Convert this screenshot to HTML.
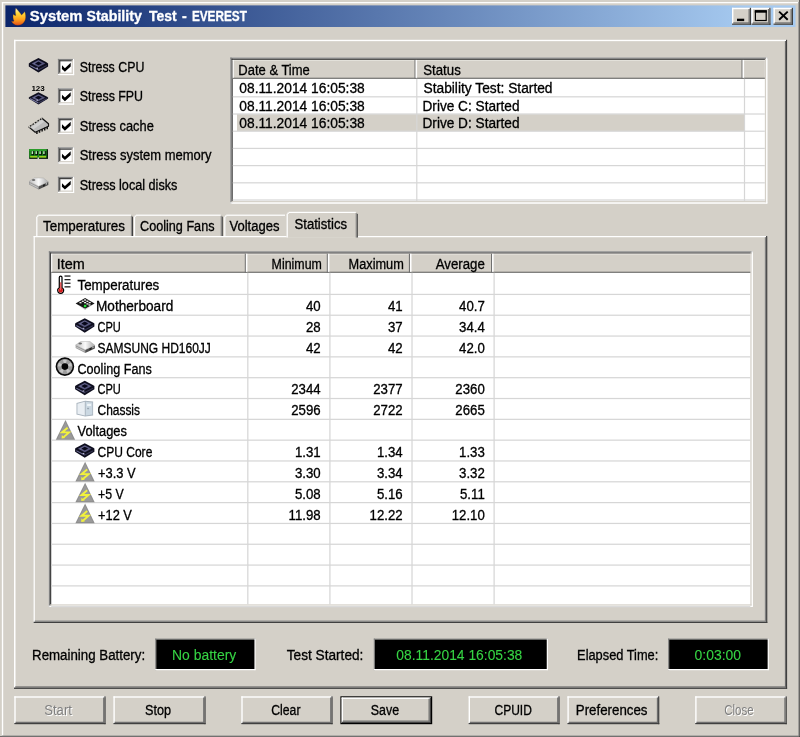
<!DOCTYPE html>
<html><head><meta charset="utf-8"><title>System Stability Test - EVEREST</title>
<style>
html,body{margin:0;padding:0;background:#d4d0c8;overflow:hidden}
svg{display:block;will-change:transform}
svg text{font-family:"Liberation Sans",sans-serif;white-space:pre}
</style></head><body>
<svg width="800" height="737" viewBox="0 0 800 737">
<rect x="0.00" y="0.00" width="800.00" height="737.00" fill="#d4d0c8"/>
<rect x="1.90" y="2.05" width="796.50" height="1.20" fill="#ffffff"/>
<rect x="1.85" y="2.05" width="1.35" height="733.55" fill="#ffffff"/>
<rect x="0.00" y="736.20" width="800.00" height="0.80" fill="#555555"/>
<rect x="799.20" y="0.00" width="0.80" height="737.00" fill="#404040"/>
<rect x="1.90" y="735.60" width="797.30" height="0.70" fill="#7a7a7a"/>
<rect x="798.40" y="2.00" width="0.80" height="734.00" fill="#808080"/>
<defs><linearGradient id="tg" x1="0" x2="1" y1="0" y2="0"><stop offset="0" stop-color="#0a246a"/><stop offset="0.94" stop-color="#a6caf0"/></linearGradient></defs>
<rect x="5.40" y="5.40" width="790.10" height="21.60" fill="url(#tg)"/>
<text y="21.30" font-size="14" font-weight="bold" fill="#fff" stroke="#fff" stroke-width="0.3"><tspan x="29.80" textLength="52.77" lengthAdjust="spacingAndGlyphs">System</tspan> <tspan x="86.60" textLength="55.28" lengthAdjust="spacingAndGlyphs">Stability</tspan> <tspan x="149.00" textLength="27.56" lengthAdjust="spacingAndGlyphs">Test</tspan> <tspan x="182.00" textLength="4.76" lengthAdjust="spacingAndGlyphs">-</tspan> <tspan x="191.90" textLength="55.02" lengthAdjust="spacingAndGlyphs">EVEREST</tspan></text>
<rect x="732.00" y="7.80" width="19.00" height="17.00" fill="#d4d0c8"/>
<rect x="732.00" y="7.80" width="19.00" height="1.40" fill="#ffffff"/>
<rect x="732.00" y="7.80" width="1.40" height="17.00" fill="#ffffff"/>
<rect x="732.00" y="23.57" width="19.00" height="1.23" fill="#404040"/>
<rect x="749.77" y="7.80" width="1.23" height="17.00" fill="#404040"/>
<rect x="733.23" y="22.35" width="16.55" height="1.23" fill="#6e6e6e"/>
<rect x="748.55" y="9.03" width="1.23" height="14.55" fill="#6e6e6e"/>
<rect x="751.50" y="7.80" width="19.00" height="17.00" fill="#d4d0c8"/>
<rect x="751.50" y="7.80" width="19.00" height="1.40" fill="#ffffff"/>
<rect x="751.50" y="7.80" width="1.40" height="17.00" fill="#ffffff"/>
<rect x="751.50" y="23.57" width="19.00" height="1.23" fill="#404040"/>
<rect x="769.27" y="7.80" width="1.23" height="17.00" fill="#404040"/>
<rect x="752.73" y="22.35" width="16.55" height="1.23" fill="#6e6e6e"/>
<rect x="768.05" y="9.03" width="1.23" height="14.55" fill="#6e6e6e"/>
<rect x="773.50" y="7.80" width="19.50" height="17.00" fill="#d4d0c8"/>
<rect x="773.50" y="7.80" width="19.50" height="1.40" fill="#ffffff"/>
<rect x="773.50" y="7.80" width="1.40" height="17.00" fill="#ffffff"/>
<rect x="773.50" y="23.57" width="19.50" height="1.23" fill="#404040"/>
<rect x="791.77" y="7.80" width="1.23" height="17.00" fill="#404040"/>
<rect x="774.73" y="22.35" width="17.05" height="1.23" fill="#6e6e6e"/>
<rect x="790.55" y="9.03" width="1.23" height="14.55" fill="#6e6e6e"/>
<rect x="737.00" y="18.70" width="7.20" height="2.40" fill="#000"/>
<rect x="755.40" y="10.90" width="10.80" height="9.60" fill="none" stroke="#000" stroke-width="1.2"/>
<rect x="754.80" y="10.30" width="12.00" height="2.40" fill="#000"/>
<path d="M779.1 11.6 L787.7 19.7 M787.7 11.6 L779.1 19.7" stroke="#000" stroke-width="1.9" fill="none"/>
<rect x="14.00" y="39.80" width="772.00" height="1.35" fill="#ffffff"/>
<rect x="14.00" y="39.80" width="1.50" height="647.80" fill="#ffffff"/>
<rect x="14.00" y="687.60" width="773.10" height="1.30" fill="#404040"/>
<rect x="786.00" y="39.80" width="1.10" height="649.10" fill="#404040"/>
<rect x="15.20" y="686.40" width="770.80" height="1.20" fill="#6a6a6a"/>
<rect x="784.90" y="41.00" width="1.10" height="646.60" fill="#6a6a6a"/>
<rect x="57.90" y="58.90" width="16.20" height="16.20" fill="#ffffff"/>
<rect x="57.90" y="58.90" width="16.20" height="1.23" fill="#808080"/>
<rect x="57.90" y="58.90" width="1.23" height="16.20" fill="#808080"/>
<rect x="59.12" y="60.12" width="13.75" height="1.23" fill="#404040"/>
<rect x="59.12" y="60.12" width="1.23" height="13.75" fill="#404040"/>
<rect x="57.90" y="73.88" width="16.20" height="1.23" fill="#ffffff"/>
<rect x="72.88" y="58.90" width="1.23" height="16.20" fill="#ffffff"/>
<rect x="59.12" y="72.65" width="13.75" height="1.23" fill="#d4d0c8"/>
<rect x="71.65" y="60.12" width="1.23" height="13.75" fill="#d4d0c8"/>
<path d="M62 65.25 L64.9 68.15 L70.7 62.80 V66.50 L64.9 71.70 L61.9 68.90 Z" fill="#000"/>
<text x="79.70" y="71.95" font-size="14" fill="#000" stroke="#000" stroke-width="0.3" textLength="64.65" lengthAdjust="spacingAndGlyphs">Stress CPU</text>
<rect x="57.90" y="88.37" width="16.20" height="16.20" fill="#ffffff"/>
<rect x="57.90" y="88.37" width="16.20" height="1.23" fill="#808080"/>
<rect x="57.90" y="88.37" width="1.23" height="16.20" fill="#808080"/>
<rect x="59.12" y="89.59" width="13.75" height="1.23" fill="#404040"/>
<rect x="59.12" y="89.59" width="1.23" height="13.75" fill="#404040"/>
<rect x="57.90" y="103.34" width="16.20" height="1.23" fill="#ffffff"/>
<rect x="72.88" y="88.37" width="1.23" height="16.20" fill="#ffffff"/>
<rect x="59.12" y="102.12" width="13.75" height="1.23" fill="#d4d0c8"/>
<rect x="71.65" y="89.59" width="1.23" height="13.75" fill="#d4d0c8"/>
<path d="M62 94.72 L64.9 97.62 L70.7 92.27 V95.97 L64.9 101.17 L61.9 98.37 Z" fill="#000"/>
<text x="79.70" y="101.37" font-size="14" fill="#000" stroke="#000" stroke-width="0.3" textLength="63.40" lengthAdjust="spacingAndGlyphs">Stress FPU</text>
<rect x="57.90" y="117.84" width="16.20" height="16.20" fill="#ffffff"/>
<rect x="57.90" y="117.84" width="16.20" height="1.23" fill="#808080"/>
<rect x="57.90" y="117.84" width="1.23" height="16.20" fill="#808080"/>
<rect x="59.12" y="119.06" width="13.75" height="1.23" fill="#404040"/>
<rect x="59.12" y="119.06" width="1.23" height="13.75" fill="#404040"/>
<rect x="57.90" y="132.81" width="16.20" height="1.23" fill="#ffffff"/>
<rect x="72.88" y="117.84" width="1.23" height="16.20" fill="#ffffff"/>
<rect x="59.12" y="131.59" width="13.75" height="1.23" fill="#d4d0c8"/>
<rect x="71.65" y="119.06" width="1.23" height="13.75" fill="#d4d0c8"/>
<path d="M62 124.19 L64.9 127.09 L70.7 121.74 V125.44 L64.9 130.64 L61.9 127.84 Z" fill="#000"/>
<text x="79.70" y="130.79" font-size="14" fill="#000" stroke="#000" stroke-width="0.3" textLength="74.10" lengthAdjust="spacingAndGlyphs">Stress cache</text>
<rect x="57.90" y="147.31" width="16.20" height="16.20" fill="#ffffff"/>
<rect x="57.90" y="147.31" width="16.20" height="1.23" fill="#808080"/>
<rect x="57.90" y="147.31" width="1.23" height="16.20" fill="#808080"/>
<rect x="59.12" y="148.53" width="13.75" height="1.23" fill="#404040"/>
<rect x="59.12" y="148.53" width="1.23" height="13.75" fill="#404040"/>
<rect x="57.90" y="162.28" width="16.20" height="1.23" fill="#ffffff"/>
<rect x="72.88" y="147.31" width="1.23" height="16.20" fill="#ffffff"/>
<rect x="59.12" y="161.06" width="13.75" height="1.23" fill="#d4d0c8"/>
<rect x="71.65" y="148.53" width="1.23" height="13.75" fill="#d4d0c8"/>
<path d="M62 153.66 L64.9 156.56 L70.7 151.21 V154.91 L64.9 160.11 L61.9 157.31 Z" fill="#000"/>
<text x="79.70" y="160.21" font-size="14" fill="#000" stroke="#000" stroke-width="0.3" textLength="131.90" lengthAdjust="spacingAndGlyphs">Stress system memory</text>
<rect x="57.90" y="176.78" width="16.20" height="16.20" fill="#ffffff"/>
<rect x="57.90" y="176.78" width="16.20" height="1.23" fill="#808080"/>
<rect x="57.90" y="176.78" width="1.23" height="16.20" fill="#808080"/>
<rect x="59.12" y="178.00" width="13.75" height="1.23" fill="#404040"/>
<rect x="59.12" y="178.00" width="1.23" height="13.75" fill="#404040"/>
<rect x="57.90" y="191.75" width="16.20" height="1.23" fill="#ffffff"/>
<rect x="72.88" y="176.78" width="1.23" height="16.20" fill="#ffffff"/>
<rect x="59.12" y="190.53" width="13.75" height="1.23" fill="#d4d0c8"/>
<rect x="71.65" y="178.00" width="1.23" height="13.75" fill="#d4d0c8"/>
<path d="M62 183.13 L64.9 186.03 L70.7 180.68 V184.38 L64.9 189.58 L61.9 186.78 Z" fill="#000"/>
<text x="79.70" y="189.63" font-size="14" fill="#000" stroke="#000" stroke-width="0.3" textLength="97.70" lengthAdjust="spacingAndGlyphs">Stress local disks</text>
<rect x="230.30" y="57.50" width="537.00" height="146.00" fill="#ffffff"/>
<rect x="230.30" y="57.50" width="537.00" height="1.23" fill="#808080"/>
<rect x="230.30" y="57.50" width="1.23" height="146.00" fill="#808080"/>
<rect x="231.53" y="58.73" width="534.55" height="1.23" fill="#404040"/>
<rect x="231.53" y="58.73" width="1.23" height="143.55" fill="#404040"/>
<rect x="230.30" y="202.28" width="537.00" height="1.23" fill="#ffffff"/>
<rect x="766.07" y="57.50" width="1.23" height="146.00" fill="#ffffff"/>
<rect x="231.53" y="201.05" width="534.55" height="1.23" fill="#d4d0c8"/>
<rect x="764.85" y="58.73" width="1.23" height="143.55" fill="#d4d0c8"/>
<rect x="232.75" y="59.95" width="532.10" height="18.85" fill="#d4d0c8"/>
<rect x="232.75" y="59.95" width="532.10" height="0.90" fill="#e6e4de"/>
<rect x="232.75" y="77.70" width="532.10" height="1.10" fill="#6a6a6a"/>
<rect x="232.75" y="59.95" width="1.00" height="17.85" fill="#ffffff"/>
<rect x="414.50" y="59.95" width="1.10" height="18.85" fill="#707070"/>
<rect x="415.60" y="59.95" width="1.50" height="17.85" fill="#ffffff"/>
<rect x="741.50" y="59.95" width="1.10" height="18.85" fill="#707070"/>
<rect x="742.60" y="59.95" width="1.50" height="17.85" fill="#ffffff"/>
<text x="238.33" y="75.30" font-size="14" fill="#000" stroke="#000" stroke-width="0.3" textLength="71.48" lengthAdjust="spacingAndGlyphs">Date &amp; Time</text>
<text x="423.25" y="75.30" font-size="14" fill="#000" stroke="#000" stroke-width="0.3" textLength="37.50" lengthAdjust="spacingAndGlyphs">Status</text>
<rect x="237.00" y="114.20" width="507.00" height="16.80" fill="#d4d0c8"/>
<rect x="232.75" y="96.20" width="532.10" height="1.23" fill="#d6d6d6"/>
<rect x="232.75" y="113.40" width="532.10" height="1.23" fill="#d6d6d6"/>
<rect x="232.75" y="130.60" width="532.10" height="1.23" fill="#d6d6d6"/>
<rect x="232.75" y="147.80" width="532.10" height="1.23" fill="#d6d6d6"/>
<rect x="232.75" y="165.00" width="532.10" height="1.23" fill="#d6d6d6"/>
<rect x="232.75" y="182.20" width="532.10" height="1.23" fill="#d6d6d6"/>
<rect x="232.75" y="199.40" width="532.10" height="1.23" fill="#d6d6d6"/>
<rect x="416.20" y="78.80" width="1.20" height="122.25" fill="#d6d6d6"/>
<rect x="743.90" y="78.80" width="1.20" height="122.25" fill="#d6d6d6"/>
<text x="239.30" y="93.30" font-size="14" fill="#000" stroke="#000" stroke-width="0.3" textLength="125.49" lengthAdjust="spacingAndGlyphs">08.11.2014 16:05:38</text>
<text x="423.50" y="93.30" font-size="14" fill="#000" stroke="#000" stroke-width="0.3" textLength="129.02" lengthAdjust="spacingAndGlyphs">Stability Test: Started</text>
<text x="239.30" y="110.50" font-size="14" fill="#000" stroke="#000" stroke-width="0.3" textLength="125.49" lengthAdjust="spacingAndGlyphs">08.11.2014 16:05:38</text>
<text x="422.53" y="110.50" font-size="14" fill="#000" stroke="#000" stroke-width="0.3" textLength="96.99" lengthAdjust="spacingAndGlyphs">Drive C: Started</text>
<text x="239.30" y="127.70" font-size="14" fill="#000" stroke="#000" stroke-width="0.3" textLength="125.49" lengthAdjust="spacingAndGlyphs">08.11.2014 16:05:38</text>
<text x="422.53" y="127.70" font-size="14" fill="#000" stroke="#000" stroke-width="0.3" textLength="96.99" lengthAdjust="spacingAndGlyphs">Drive D: Started</text>
<rect x="33.60" y="236.00" width="733.70" height="387.00" fill="#d4d0c8"/>
<rect x="33.60" y="236.00" width="733.70" height="1.23" fill="#ffffff"/>
<rect x="33.60" y="236.00" width="1.23" height="387.00" fill="#ffffff"/>
<rect x="33.60" y="621.77" width="733.70" height="1.23" fill="#404040"/>
<rect x="766.07" y="236.00" width="1.23" height="387.00" fill="#404040"/>
<rect x="34.83" y="620.55" width="731.25" height="1.23" fill="#808080"/>
<rect x="764.85" y="237.22" width="1.23" height="384.55" fill="#808080"/>
<rect x="36.20" y="214.60" width="96.80" height="21.40" fill="#d4d0c8"/>
<rect x="38.20" y="214.60" width="92.80" height="1.23" fill="#ffffff"/>
<rect x="36.20" y="216.60" width="1.23" height="19.40" fill="#ffffff"/>
<rect x="37.00" y="215.40" width="1.40" height="1.40" fill="#ffffff"/>
<rect x="131.80" y="216.60" width="1.20" height="19.40" fill="#404040"/>
<rect x="130.90" y="215.80" width="0.90" height="20.20" fill="#808080"/>
<text x="43.00" y="231.05" font-size="14" fill="#000" stroke="#000" stroke-width="0.3" textLength="82.00" lengthAdjust="spacingAndGlyphs">Temperatures</text>
<rect x="133.90" y="214.60" width="88.90" height="21.40" fill="#d4d0c8"/>
<rect x="135.90" y="214.60" width="84.90" height="1.23" fill="#ffffff"/>
<rect x="133.90" y="216.60" width="1.23" height="19.40" fill="#ffffff"/>
<rect x="134.70" y="215.40" width="1.40" height="1.40" fill="#ffffff"/>
<rect x="221.60" y="216.60" width="1.20" height="19.40" fill="#404040"/>
<rect x="220.70" y="215.80" width="0.90" height="20.20" fill="#808080"/>
<text x="140.00" y="231.05" font-size="14" fill="#000" stroke="#000" stroke-width="0.3" textLength="74.50" lengthAdjust="spacingAndGlyphs">Cooling Fans</text>
<rect x="224.20" y="214.60" width="62.80" height="21.40" fill="#d4d0c8"/>
<rect x="226.20" y="214.60" width="58.80" height="1.23" fill="#ffffff"/>
<rect x="224.20" y="216.60" width="1.23" height="19.40" fill="#ffffff"/>
<rect x="225.00" y="215.40" width="1.40" height="1.40" fill="#ffffff"/>
<text x="229.50" y="231.05" font-size="14" fill="#000" stroke="#000" stroke-width="0.3" textLength="50.00" lengthAdjust="spacingAndGlyphs">Voltages</text>
<rect x="286.60" y="211.80" width="71.20" height="25.72" fill="#d4d0c8"/>
<rect x="288.60" y="211.80" width="67.20" height="1.23" fill="#ffffff"/>
<rect x="286.60" y="213.80" width="1.23" height="23.72" fill="#ffffff"/>
<rect x="287.40" y="212.60" width="1.40" height="1.40" fill="#ffffff"/>
<rect x="356.60" y="213.80" width="1.20" height="23.72" fill="#404040"/>
<rect x="355.70" y="213.00" width="0.90" height="24.53" fill="#808080"/>
<text x="294.50" y="228.60" font-size="14" fill="#000" stroke="#000" stroke-width="0.3" textLength="52.50" lengthAdjust="spacingAndGlyphs">Statistics</text>
<rect x="48.80" y="251.30" width="704.00" height="355.50" fill="#ffffff"/>
<rect x="48.80" y="251.30" width="704.00" height="1.23" fill="#808080"/>
<rect x="48.80" y="251.30" width="1.23" height="355.50" fill="#808080"/>
<rect x="50.02" y="252.53" width="701.55" height="1.23" fill="#404040"/>
<rect x="50.02" y="252.53" width="1.23" height="353.05" fill="#404040"/>
<rect x="48.80" y="605.57" width="704.00" height="1.23" fill="#ffffff"/>
<rect x="751.57" y="251.30" width="1.23" height="355.50" fill="#ffffff"/>
<rect x="50.02" y="604.35" width="701.55" height="1.23" fill="#d4d0c8"/>
<rect x="750.35" y="252.53" width="1.23" height="353.05" fill="#d4d0c8"/>
<rect x="51.25" y="253.75" width="699.10" height="19.05" fill="#d4d0c8"/>
<rect x="51.25" y="253.75" width="699.10" height="0.90" fill="#e6e4de"/>
<rect x="51.25" y="271.70" width="699.10" height="1.10" fill="#6a6a6a"/>
<rect x="51.25" y="253.75" width="1.00" height="18.05" fill="#ffffff"/>
<rect x="244.80" y="253.75" width="1.10" height="19.05" fill="#707070"/>
<rect x="245.90" y="253.75" width="1.50" height="18.05" fill="#ffffff"/>
<rect x="326.80" y="253.75" width="1.10" height="19.05" fill="#707070"/>
<rect x="327.90" y="253.75" width="1.50" height="18.05" fill="#ffffff"/>
<rect x="408.90" y="253.75" width="1.10" height="19.05" fill="#707070"/>
<rect x="410.00" y="253.75" width="1.50" height="18.05" fill="#ffffff"/>
<rect x="491.00" y="253.75" width="1.10" height="19.05" fill="#707070"/>
<rect x="492.10" y="253.75" width="1.50" height="18.05" fill="#ffffff"/>
<text x="56.67" y="269.30" font-size="14" fill="#000" stroke="#000" stroke-width="0.3" textLength="28.01" lengthAdjust="spacingAndGlyphs">Item</text>
<text x="271.62" y="269.30" font-size="14" fill="#000" stroke="#000" stroke-width="0.3" textLength="50.22" lengthAdjust="spacingAndGlyphs">Minimum</text>
<text x="348.59" y="269.30" font-size="14" fill="#000" stroke="#000" stroke-width="0.3" textLength="55.26" lengthAdjust="spacingAndGlyphs">Maximum</text>
<text x="435.75" y="269.30" font-size="14" fill="#000" stroke="#000" stroke-width="0.3" textLength="49.05" lengthAdjust="spacingAndGlyphs">Average</text>
<rect x="51.25" y="293.80" width="699.10" height="1.23" fill="#d6d6d6"/>
<rect x="51.25" y="314.62" width="699.10" height="1.23" fill="#d6d6d6"/>
<rect x="51.25" y="335.44" width="699.10" height="1.23" fill="#d6d6d6"/>
<rect x="51.25" y="356.26" width="699.10" height="1.23" fill="#d6d6d6"/>
<rect x="51.25" y="377.08" width="699.10" height="1.23" fill="#d6d6d6"/>
<rect x="51.25" y="397.90" width="699.10" height="1.23" fill="#d6d6d6"/>
<rect x="51.25" y="418.72" width="699.10" height="1.23" fill="#d6d6d6"/>
<rect x="51.25" y="439.54" width="699.10" height="1.23" fill="#d6d6d6"/>
<rect x="51.25" y="460.36" width="699.10" height="1.23" fill="#d6d6d6"/>
<rect x="51.25" y="481.18" width="699.10" height="1.23" fill="#d6d6d6"/>
<rect x="51.25" y="502.00" width="699.10" height="1.23" fill="#d6d6d6"/>
<rect x="51.25" y="522.82" width="699.10" height="1.23" fill="#d6d6d6"/>
<rect x="51.25" y="543.64" width="699.10" height="1.23" fill="#d6d6d6"/>
<rect x="51.25" y="564.46" width="699.10" height="1.23" fill="#d6d6d6"/>
<rect x="51.25" y="585.28" width="699.10" height="1.23" fill="#d6d6d6"/>
<rect x="51.25" y="606.10" width="699.10" height="1.23" fill="#d6d6d6"/>
<rect x="247.20" y="272.80" width="1.23" height="331.55" fill="#d6d6d6"/>
<rect x="329.30" y="272.80" width="1.23" height="331.55" fill="#d6d6d6"/>
<rect x="411.40" y="272.80" width="1.23" height="331.55" fill="#d6d6d6"/>
<rect x="493.50" y="272.80" width="1.23" height="331.55" fill="#d6d6d6"/>
<text x="77.50" y="290.10" font-size="14" fill="#000" stroke="#000" stroke-width="0.3" textLength="81.75" lengthAdjust="spacingAndGlyphs">Temperatures</text>
<text x="96.03" y="310.96" font-size="14" fill="#000" stroke="#000" stroke-width="0.3" textLength="77.24" lengthAdjust="spacingAndGlyphs">Motherboard</text>
<text x="305.98" y="310.96" font-size="14" fill="#000" stroke="#000" stroke-width="0.3" textLength="14.72" lengthAdjust="spacingAndGlyphs">40</text>
<text x="387.98" y="310.96" font-size="14" fill="#000" stroke="#000" stroke-width="0.3" textLength="14.72" lengthAdjust="spacingAndGlyphs">41</text>
<text x="459.05" y="310.96" font-size="14" fill="#000" stroke="#000" stroke-width="0.3" textLength="25.75" lengthAdjust="spacingAndGlyphs">40.7</text>
<text x="97.50" y="331.82" font-size="14" fill="#000" stroke="#000" stroke-width="0.3" textLength="23.34" lengthAdjust="spacingAndGlyphs">CPU</text>
<text x="305.98" y="331.82" font-size="14" fill="#000" stroke="#000" stroke-width="0.3" textLength="14.72" lengthAdjust="spacingAndGlyphs">28</text>
<text x="387.98" y="331.82" font-size="14" fill="#000" stroke="#000" stroke-width="0.3" textLength="14.72" lengthAdjust="spacingAndGlyphs">37</text>
<text x="459.05" y="331.82" font-size="14" fill="#000" stroke="#000" stroke-width="0.3" textLength="25.75" lengthAdjust="spacingAndGlyphs">34.4</text>
<text x="97.50" y="352.68" font-size="14" fill="#000" stroke="#000" stroke-width="0.3" textLength="113.36" lengthAdjust="spacingAndGlyphs">SAMSUNG HD160JJ</text>
<text x="305.98" y="352.68" font-size="14" fill="#000" stroke="#000" stroke-width="0.3" textLength="14.72" lengthAdjust="spacingAndGlyphs">42</text>
<text x="387.98" y="352.68" font-size="14" fill="#000" stroke="#000" stroke-width="0.3" textLength="14.72" lengthAdjust="spacingAndGlyphs">42</text>
<text x="459.05" y="352.68" font-size="14" fill="#000" stroke="#000" stroke-width="0.3" textLength="25.75" lengthAdjust="spacingAndGlyphs">42.0</text>
<text x="77.50" y="373.54" font-size="14" fill="#000" stroke="#000" stroke-width="0.3" textLength="74.25" lengthAdjust="spacingAndGlyphs">Cooling Fans</text>
<text x="97.50" y="394.40" font-size="14" fill="#000" stroke="#000" stroke-width="0.3" textLength="23.34" lengthAdjust="spacingAndGlyphs">CPU</text>
<text x="291.27" y="394.40" font-size="14" fill="#000" stroke="#000" stroke-width="0.3" textLength="29.43" lengthAdjust="spacingAndGlyphs">2344</text>
<text x="373.27" y="394.40" font-size="14" fill="#000" stroke="#000" stroke-width="0.3" textLength="29.43" lengthAdjust="spacingAndGlyphs">2377</text>
<text x="455.37" y="394.40" font-size="14" fill="#000" stroke="#000" stroke-width="0.3" textLength="29.43" lengthAdjust="spacingAndGlyphs">2360</text>
<text x="97.50" y="415.26" font-size="14" fill="#000" stroke="#000" stroke-width="0.3" textLength="42.50" lengthAdjust="spacingAndGlyphs">Chassis</text>
<text x="291.27" y="415.26" font-size="14" fill="#000" stroke="#000" stroke-width="0.3" textLength="29.43" lengthAdjust="spacingAndGlyphs">2596</text>
<text x="373.27" y="415.26" font-size="14" fill="#000" stroke="#000" stroke-width="0.3" textLength="29.43" lengthAdjust="spacingAndGlyphs">2722</text>
<text x="455.37" y="415.26" font-size="14" fill="#000" stroke="#000" stroke-width="0.3" textLength="29.43" lengthAdjust="spacingAndGlyphs">2665</text>
<text x="77.60" y="436.12" font-size="14" fill="#000" stroke="#000" stroke-width="0.3" textLength="49.30" lengthAdjust="spacingAndGlyphs">Voltages</text>
<text x="97.50" y="456.98" font-size="14" fill="#000" stroke="#000" stroke-width="0.3" textLength="54.82" lengthAdjust="spacingAndGlyphs">CPU Core</text>
<text x="294.95" y="456.98" font-size="14" fill="#000" stroke="#000" stroke-width="0.3" textLength="25.75" lengthAdjust="spacingAndGlyphs">1.31</text>
<text x="376.95" y="456.98" font-size="14" fill="#000" stroke="#000" stroke-width="0.3" textLength="25.75" lengthAdjust="spacingAndGlyphs">1.34</text>
<text x="459.05" y="456.98" font-size="14" fill="#000" stroke="#000" stroke-width="0.3" textLength="25.75" lengthAdjust="spacingAndGlyphs">1.33</text>
<text x="98.00" y="477.84" font-size="14" fill="#000" stroke="#000" stroke-width="0.3" textLength="37.64" lengthAdjust="spacingAndGlyphs">+3.3 V</text>
<text x="294.95" y="477.84" font-size="14" fill="#000" stroke="#000" stroke-width="0.3" textLength="25.75" lengthAdjust="spacingAndGlyphs">3.30</text>
<text x="376.95" y="477.84" font-size="14" fill="#000" stroke="#000" stroke-width="0.3" textLength="25.75" lengthAdjust="spacingAndGlyphs">3.34</text>
<text x="459.05" y="477.84" font-size="14" fill="#000" stroke="#000" stroke-width="0.3" textLength="25.75" lengthAdjust="spacingAndGlyphs">3.32</text>
<text x="98.00" y="498.70" font-size="14" fill="#000" stroke="#000" stroke-width="0.3" textLength="25.67" lengthAdjust="spacingAndGlyphs">+5 V</text>
<text x="294.95" y="498.70" font-size="14" fill="#000" stroke="#000" stroke-width="0.3" textLength="25.75" lengthAdjust="spacingAndGlyphs">5.08</text>
<text x="376.95" y="498.70" font-size="14" fill="#000" stroke="#000" stroke-width="0.3" textLength="25.75" lengthAdjust="spacingAndGlyphs">5.16</text>
<text x="460.03" y="498.70" font-size="14" fill="#000" stroke="#000" stroke-width="0.3" textLength="24.77" lengthAdjust="spacingAndGlyphs">5.11</text>
<text x="98.00" y="519.56" font-size="14" fill="#000" stroke="#000" stroke-width="0.3" textLength="33.89" lengthAdjust="spacingAndGlyphs">+12 V</text>
<text x="288.57" y="519.56" font-size="14" fill="#000" stroke="#000" stroke-width="0.3" textLength="32.13" lengthAdjust="spacingAndGlyphs">11.98</text>
<text x="369.59" y="519.56" font-size="14" fill="#000" stroke="#000" stroke-width="0.3" textLength="33.11" lengthAdjust="spacingAndGlyphs">12.22</text>
<text x="451.69" y="519.56" font-size="14" fill="#000" stroke="#000" stroke-width="0.3" textLength="33.11" lengthAdjust="spacingAndGlyphs">12.10</text>
<text x="32.05" y="659.90" font-size="14" fill="#000" stroke="#000" stroke-width="0.3" textLength="113.04" lengthAdjust="spacingAndGlyphs">Remaining Battery:</text>
<text x="286.75" y="659.90" font-size="14" fill="#000" stroke="#000" stroke-width="0.3" textLength="76.62" lengthAdjust="spacingAndGlyphs">Test Started:</text>
<text x="577.09" y="659.90" font-size="14" fill="#000" stroke="#000" stroke-width="0.3" textLength="81.23" lengthAdjust="spacingAndGlyphs">Elapsed Time:</text>
<rect x="155.20" y="638.60" width="100.30" height="1.10" fill="#808080"/>
<rect x="155.20" y="638.60" width="1.10" height="31.60" fill="#808080"/>
<rect x="155.20" y="669.00" width="100.30" height="1.20" fill="#ffffff"/>
<rect x="254.40" y="638.60" width="1.20" height="31.60" fill="#ffffff"/>
<rect x="156.30" y="639.70" width="98.10" height="29.30" fill="#000"/>
<text x="172.01" y="659.60" font-size="14" fill="#36d444" stroke="#36d444" stroke-width="0.1" textLength="64.24" lengthAdjust="spacingAndGlyphs">No battery</text>
<rect x="373.80" y="638.60" width="174.00" height="1.10" fill="#808080"/>
<rect x="373.80" y="638.60" width="1.10" height="31.60" fill="#808080"/>
<rect x="373.80" y="669.00" width="174.00" height="1.20" fill="#ffffff"/>
<rect x="546.70" y="638.60" width="1.20" height="31.60" fill="#ffffff"/>
<rect x="374.90" y="639.70" width="171.80" height="29.30" fill="#000"/>
<text x="396.25" y="659.60" font-size="14" fill="#36d444" stroke="#36d444" stroke-width="0.1" textLength="126.04" lengthAdjust="spacingAndGlyphs">08.11.2014 16:05:38</text>
<rect x="668.10" y="638.60" width="100.60" height="1.10" fill="#808080"/>
<rect x="668.10" y="638.60" width="1.10" height="31.60" fill="#808080"/>
<rect x="668.10" y="669.00" width="100.60" height="1.20" fill="#ffffff"/>
<rect x="767.60" y="638.60" width="1.20" height="31.60" fill="#ffffff"/>
<rect x="669.20" y="639.70" width="98.40" height="29.30" fill="#000"/>
<text x="694.50" y="659.60" font-size="14" fill="#36d444" stroke="#36d444" stroke-width="0.1" textLength="46.54" lengthAdjust="spacingAndGlyphs">0:03:00</text>
<rect x="14.30" y="696.30" width="91.30" height="27.90" fill="#d4d0c8"/>
<rect x="14.30" y="696.30" width="91.30" height="1.40" fill="#ffffff"/>
<rect x="14.30" y="696.30" width="1.40" height="27.90" fill="#ffffff"/>
<rect x="14.30" y="722.98" width="91.30" height="1.23" fill="#404040"/>
<rect x="104.38" y="696.30" width="1.23" height="27.90" fill="#404040"/>
<rect x="15.53" y="721.75" width="88.85" height="1.23" fill="#6e6e6e"/>
<rect x="103.15" y="697.52" width="1.23" height="25.45" fill="#6e6e6e"/>
<text x="44.25" y="715.10" font-size="14" fill="#808080" textLength="27.65" lengthAdjust="spacingAndGlyphs" style="filter:drop-shadow(1.2px 1.2px 0 #fff)">Start</text>
<rect x="113.40" y="696.30" width="92.20" height="27.90" fill="#d4d0c8"/>
<rect x="113.40" y="696.30" width="92.20" height="1.40" fill="#ffffff"/>
<rect x="113.40" y="696.30" width="1.40" height="27.90" fill="#ffffff"/>
<rect x="113.40" y="722.98" width="92.20" height="1.23" fill="#404040"/>
<rect x="204.38" y="696.30" width="1.23" height="27.90" fill="#404040"/>
<rect x="114.62" y="721.75" width="89.75" height="1.23" fill="#6e6e6e"/>
<rect x="203.15" y="697.52" width="1.23" height="25.45" fill="#6e6e6e"/>
<text x="145.00" y="715.10" font-size="14" fill="#000" stroke="#000" stroke-width="0.3" textLength="26.06" lengthAdjust="spacingAndGlyphs">Stop</text>
<rect x="241.30" y="696.30" width="91.30" height="27.90" fill="#d4d0c8"/>
<rect x="241.30" y="696.30" width="91.30" height="1.40" fill="#ffffff"/>
<rect x="241.30" y="696.30" width="1.40" height="27.90" fill="#ffffff"/>
<rect x="241.30" y="722.98" width="91.30" height="1.23" fill="#404040"/>
<rect x="331.38" y="696.30" width="1.23" height="27.90" fill="#404040"/>
<rect x="242.53" y="721.75" width="88.85" height="1.23" fill="#6e6e6e"/>
<rect x="330.15" y="697.52" width="1.23" height="25.45" fill="#6e6e6e"/>
<text x="271.25" y="715.10" font-size="14" fill="#000" stroke="#000" stroke-width="0.3" textLength="29.21" lengthAdjust="spacingAndGlyphs">Clear</text>
<rect x="340.40" y="696.30" width="91.80" height="27.90" fill="#000"/>
<rect x="341.62" y="697.52" width="89.35" height="25.45" fill="#d4d0c8"/>
<rect x="341.62" y="697.52" width="89.35" height="1.40" fill="#ffffff"/>
<rect x="341.62" y="697.52" width="1.40" height="25.45" fill="#ffffff"/>
<rect x="341.62" y="721.75" width="89.35" height="1.23" fill="#404040"/>
<rect x="429.75" y="697.52" width="1.23" height="25.45" fill="#404040"/>
<rect x="342.85" y="720.52" width="86.90" height="1.23" fill="#6e6e6e"/>
<rect x="428.52" y="698.75" width="1.23" height="23.00" fill="#6e6e6e"/>
<text x="370.75" y="715.10" font-size="14" fill="#000" stroke="#000" stroke-width="0.3" textLength="28.31" lengthAdjust="spacingAndGlyphs">Save</text>
<rect x="468.60" y="696.30" width="91.00" height="27.90" fill="#d4d0c8"/>
<rect x="468.60" y="696.30" width="91.00" height="1.40" fill="#ffffff"/>
<rect x="468.60" y="696.30" width="1.40" height="27.90" fill="#ffffff"/>
<rect x="468.60" y="722.98" width="91.00" height="1.23" fill="#404040"/>
<rect x="558.38" y="696.30" width="1.23" height="27.90" fill="#404040"/>
<rect x="469.83" y="721.75" width="88.55" height="1.23" fill="#6e6e6e"/>
<rect x="557.15" y="697.52" width="1.23" height="25.45" fill="#6e6e6e"/>
<text x="494.50" y="715.10" font-size="14" fill="#000" stroke="#000" stroke-width="0.3" textLength="37.34" lengthAdjust="spacingAndGlyphs">CPUID</text>
<rect x="567.40" y="696.30" width="91.90" height="27.90" fill="#d4d0c8"/>
<rect x="567.40" y="696.30" width="91.90" height="1.40" fill="#ffffff"/>
<rect x="567.40" y="696.30" width="1.40" height="27.90" fill="#ffffff"/>
<rect x="567.40" y="722.98" width="91.90" height="1.23" fill="#404040"/>
<rect x="658.07" y="696.30" width="1.23" height="27.90" fill="#404040"/>
<rect x="568.62" y="721.75" width="89.45" height="1.23" fill="#6e6e6e"/>
<rect x="656.85" y="697.52" width="1.23" height="25.45" fill="#6e6e6e"/>
<text x="575.80" y="715.10" font-size="14" fill="#000" stroke="#000" stroke-width="0.3" textLength="71.70" lengthAdjust="spacingAndGlyphs">Preferences</text>
<rect x="695.20" y="696.30" width="91.60" height="27.90" fill="#d4d0c8"/>
<rect x="695.20" y="696.30" width="91.60" height="1.40" fill="#ffffff"/>
<rect x="695.20" y="696.30" width="1.40" height="27.90" fill="#ffffff"/>
<rect x="695.20" y="722.98" width="91.60" height="1.23" fill="#404040"/>
<rect x="785.57" y="696.30" width="1.23" height="27.90" fill="#404040"/>
<rect x="696.43" y="721.75" width="89.15" height="1.23" fill="#6e6e6e"/>
<rect x="784.35" y="697.52" width="1.23" height="25.45" fill="#6e6e6e"/>
<text x="724.25" y="715.10" font-size="14" fill="#808080" textLength="29.37" lengthAdjust="spacingAndGlyphs" style="filter:drop-shadow(1.2px 1.2px 0 #fff)">Close</text>
<g transform="translate(10.70 8.10)"><defs><linearGradient id="fg" x1="0" x2="0" y1="0" y2="1"><stop offset="0" stop-color="#fffbd0"/><stop offset="0.3" stop-color="#ffd83a"/><stop offset="0.65" stop-color="#ffa41c"/><stop offset="1" stop-color="#e2501a"/></linearGradient></defs><path d="M5.1 0 C6.8 1.9 9.3 4.4 10.8 6.9 C12.1 5.9 13.3 4.7 14.1 3.5 C14.8 5.9 15.5 8.9 14.5 11.9 C13.3 15.4 10.3 17.3 6.8 17.2 C3.8 17.1 1.8 15.4 0.6 12.6 C1.6 13.4 2.6 13.5 3.3 12.9 C2.3 10.9 2.1 8.4 2.5 6.1 C3.3 6.9 4.3 7.4 5.1 7.4 C4.5 4.9 4.5 2.4 5.1 0 Z" fill="url(#fg)" stroke="#5a2408" stroke-width="0.5" stroke-opacity="0.5"/></g>
<g transform="translate(28.80 58.10)"><polygon points="0,5.3 2,4 9.65,0 17.3,4 19.3,5.3 19.3,8.4 9.65,14.5 0,8.4" fill="#0e0e1e"/><polygon points="2.8,5.5 9.65,2 16.5,5.5 9.65,9" fill="#55557c"/><polygon points="3.9,5.5 9.65,2.6 11.4,3.5 5.6,6.4" fill="#6a6a92"/><polygon points="6.2,5.3 9.65,3.4 13.1,5.3 9.65,7.2" fill="#08081a"/><polygon points="1.3,6.9 9.65,11.2 9.65,12.3 1.3,8.0" fill="#7676a0"/><polygon points="9.65,11.2 18,6.9 18,8.0 9.65,12.3" fill="#3a3a58"/><rect x="7.6" y="9.6" width="1.6" height="1.1" fill="#d0d0ea" opacity="0.85"/></g>
<text x="31.40" y="90.70" font-size="7.6" font-weight="bold" fill="#000" textLength="13.4" lengthAdjust="spacingAndGlyphs">123</text><g transform="translate(28.80 92.30)"><polygon points="0,5.3 2,4 9.65,0 17.3,4 19.3,5.3 19.3,6.1 9.65,12.2 0,6.1" fill="#0e0e1e"/><polygon points="2.8,5.5 9.65,2 16.5,5.5 9.65,9" fill="#55557c"/><polygon points="3.9,5.5 9.65,2.6 11.4,3.5 5.6,6.4" fill="#6a6a92"/><polygon points="6.2,5.3 9.65,3.4 13.1,5.3 9.65,7.2" fill="#08081a"/><polygon points="1.3,6.9 9.65,11.2 9.65,10.0 1.3,5.7" fill="#7676a0"/><polygon points="9.65,11.2 18,6.9 18,5.7 9.65,10.0" fill="#3a3a58"/><rect x="7.6" y="7.3" width="1.6" height="1.1" fill="#d0d0ea" opacity="0.85"/></g>
<g transform="translate(28.60 118.00)"><polygon points="0.3,9.1 13.4,0.2 19.9,5.8 19.9,8.2 6.6,14.3" fill="#bcbcbc" stroke="#111" stroke-width="1.2" stroke-linejoin="round"/><path d="M0.3 9.1 L13.4 0.2" stroke="#d4d0c8" stroke-width="1.4" stroke-dasharray="1.4 1.6" fill="none"/><path d="M8.3 13.4 v2.6 M10.9 12.2 v2.6 M13.5 11 v2.6 M16.1 9.8 v2.6 M18.6 8.7 v2.6" stroke="#111" stroke-width="1.5"/><polygon points="2.2,9.2 13.2,1.8 15.5,3.8 5,11.2" fill="#d8d8d8" opacity="0.7"/></g>
<g transform="translate(28.90 149.20)"><rect x="0.3" y="0" width="18.8" height="9.7" fill="#0a1a0a"/><rect x="0.3" y="0" width="17.4" height="8.4" fill="#1e8c1e"/><rect x="0.3" y="0" width="17.4" height="1.6" fill="#2fa42f"/><rect x="2.40" y="1.9" width="2.9" height="4.1" fill="#061006"/><rect x="2.70" y="2" width="1.5" height="2.9" fill="#b8f0b8"/><rect x="6.25" y="1.9" width="2.9" height="4.1" fill="#061006"/><rect x="6.55" y="2" width="1.5" height="2.9" fill="#b8f0b8"/><rect x="10.10" y="1.9" width="2.9" height="4.1" fill="#061006"/><rect x="10.40" y="2" width="1.5" height="2.9" fill="#b8f0b8"/><rect x="13.95" y="1.9" width="2.9" height="4.1" fill="#061006"/><rect x="14.25" y="2" width="1.5" height="2.9" fill="#b8f0b8"/><rect x="1.3" y="6.9" width="7" height="1.4" fill="#a8d820"/><rect x="10.2" y="6.9" width="7" height="1.4" fill="#a8d820"/><rect x="8.6" y="8.2" width="1.5" height="1.6" fill="#d4d0c8"/></g>
<g transform="translate(28.80 177.70)"><defs><linearGradient id="dg" x1="0" x2="1" y1="0" y2="0"><stop offset="0" stop-color="#bdbdbd"/><stop offset="0.5" stop-color="#fafafa"/><stop offset="1" stop-color="#a8a8a8"/></linearGradient></defs><polygon points="0.2,3.8 9.8,8.6 9.8,11.8 0.2,6.9" fill="#9c9c9c"/><polygon points="1,5.6 9,9.6 9,10.4 1,6.4" fill="#d0d0d0"/><polygon points="9.8,8.6 19.5,4.1 19.5,7.3 9.8,11.8" fill="#505050"/><polygon points="0.2,3.8 5.4,0.3 14.6,0.3 19.5,4.1 9.8,8.6" fill="url(#dg)" stroke="#a0a0a0" stroke-width="0.4"/><ellipse cx="4.8" cy="2.3" rx="1.8" ry="0.9" fill="#6e6e6e"/><polygon points="14.2,7.2 16,6.4 16,8.2 14.2,9" fill="#1c1c1c"/><polygon points="17,5.8 18.2,5.3 18.2,6.6 17,7.1" fill="#c8c8c8"/></g>
<g transform="translate(56.80 275.10)"><path d="M2.5 12.6 V2.3 A1.35 1.35 0 0 1 5.2 2.3 V12.6 A3 3 0 1 1 2.5 12.6 Z" fill="#fff" stroke="#000" stroke-width="1.25"/><path d="M3.1 7.3 H4.6 V13 A2.3 2.3 0 1 1 3.1 13 Z" fill="#d41c1c"/><rect x="3.2" y="8" width="0.7" height="7" fill="#ff9a9a" opacity="0.8"/><rect x="7.7" y="0.30" width="6" height="1.3" fill="#222"/><rect x="7.7" y="3.90" width="6" height="1.3" fill="#222"/><rect x="7.7" y="7.50" width="6" height="1.3" fill="#222"/><rect x="7.7" y="11.10" width="6" height="1.3" fill="#222"/></g>
<g transform="translate(75.60 298.10)"><polygon points="0,5.4 9.5,0 19,5.4 9.5,10.6" fill="#161616"/><polygon points="2,6.6 9.5,10.9 17,6.6 9.5,11.8" fill="#888" opacity="0.5"/><rect x="8.5" y="1.25" width="2" height="1.3" fill="#f4f4f4"/><rect x="6.2" y="2.55" width="2" height="1.3" fill="#f4f4f4"/><rect x="10.8" y="2.55" width="2" height="1.3" fill="#f4f4f4"/><rect x="8.5" y="3.85" width="2" height="1.3" fill="#f4f4f4"/><rect x="13.1" y="3.85" width="2" height="1.3" fill="#f4f4f4"/><rect x="10.8" y="5.15" width="2" height="1.3" fill="#f4f4f4"/><rect x="3.9" y="3.95" width="2" height="1.3" fill="#f4f4f4"/><rect x="12.9" y="6.25" width="2" height="1.3" fill="#f4f4f4"/><rect x="8.3" y="6.7" width="2.4" height="2.4" fill="#22e234"/></g>
<g transform="translate(75.10 318.20)"><polygon points="0,5.3 2,4 9.65,0 17.3,4 19.3,5.3 19.3,8.4 9.65,14.5 0,8.4" fill="#0e0e1e"/><polygon points="2.8,5.5 9.65,2 16.5,5.5 9.65,9" fill="#55557c"/><polygon points="3.9,5.5 9.65,2.6 11.4,3.5 5.6,6.4" fill="#6a6a92"/><polygon points="6.2,5.3 9.65,3.4 13.1,5.3 9.65,7.2" fill="#08081a"/><polygon points="1.3,6.9 9.65,11.2 9.65,12.3 1.3,8.0" fill="#7676a0"/><polygon points="9.65,11.2 18,6.9 18,8.0 9.65,12.3" fill="#3a3a58"/><rect x="7.6" y="9.6" width="1.6" height="1.1" fill="#d0d0ea" opacity="0.85"/></g>
<g transform="translate(75.40 341.20)"><defs><linearGradient id="dg" x1="0" x2="1" y1="0" y2="0"><stop offset="0" stop-color="#bdbdbd"/><stop offset="0.5" stop-color="#fafafa"/><stop offset="1" stop-color="#a8a8a8"/></linearGradient></defs><polygon points="0.2,3.8 9.8,8.6 9.8,11.8 0.2,6.9" fill="#9c9c9c"/><polygon points="1,5.6 9,9.6 9,10.4 1,6.4" fill="#d0d0d0"/><polygon points="9.8,8.6 19.5,4.1 19.5,7.3 9.8,11.8" fill="#505050"/><polygon points="0.2,3.8 5.4,0.3 14.6,0.3 19.5,4.1 9.8,8.6" fill="url(#dg)" stroke="#a0a0a0" stroke-width="0.4"/><ellipse cx="4.8" cy="2.3" rx="1.8" ry="0.9" fill="#6e6e6e"/><polygon points="14.2,7.2 16,6.4 16,8.2 14.2,9" fill="#1c1c1c"/><polygon points="17,5.8 18.2,5.3 18.2,6.6 17,7.1" fill="#c8c8c8"/></g>
<g transform="translate(64.90 366.60)"><circle r="8.50" fill="#9c9c9c" stroke="#0a0a0a" stroke-width="1.6"/><polygon points="-0.99,-3.46 -1.98,-6.92 1.98,-6.92 0.99,-3.46" fill="#c6c6c6"/><polygon points="2.98,-2.01 5.97,-4.03 7.20,-0.25 3.60,-0.13" fill="#c6c6c6"/><polygon points="2.84,2.22 5.67,4.43 2.46,6.77 1.23,3.38" fill="#c6c6c6"/><polygon points="-1.23,3.38 -2.46,6.77 -5.67,4.43 -2.84,2.22" fill="#c6c6c6"/><polygon points="-3.60,-0.13 -7.20,-0.25 -5.97,-4.03 -2.98,-2.01" fill="#c6c6c6"/><circle r="3.3" fill="#050505"/></g>
<g transform="translate(75.10 380.80)"><polygon points="0,5.3 2,4 9.65,0 17.3,4 19.3,5.3 19.3,8.4 9.65,14.5 0,8.4" fill="#0e0e1e"/><polygon points="2.8,5.5 9.65,2 16.5,5.5 9.65,9" fill="#55557c"/><polygon points="3.9,5.5 9.65,2.6 11.4,3.5 5.6,6.4" fill="#6a6a92"/><polygon points="6.2,5.3 9.65,3.4 13.1,5.3 9.65,7.2" fill="#08081a"/><polygon points="1.3,6.9 9.65,11.2 9.65,12.3 1.3,8.0" fill="#7676a0"/><polygon points="9.65,11.2 18,6.9 18,8.0 9.65,12.3" fill="#3a3a58"/><rect x="7.6" y="9.6" width="1.6" height="1.1" fill="#d0d0ea" opacity="0.85"/></g>
<g transform="translate(76.50 400.80)"><polygon points="0,2.2 8.6,0 16.6,0.8 16.6,14.6 8.6,15.6 0,13.6" fill="#a9b4be"/><polygon points="0.9,2.9 8.3,1 8.3,14.6 0.9,12.9" fill="#e9eef3"/><polygon points="9.2,1 15.8,1.6 15.8,13.8 9.2,14.6" fill="#cbd8e2"/><rect x="10.6" y="3" width="4" height="2.2" fill="#eef4f8"/><rect x="10.6" y="7" width="2" height="1.4" fill="#98a6b2"/></g>
<g transform="translate(55.80 420.10)"><polygon points="9.7,0 19.3,19.7 0,19.7" fill="#8e8e8e"/><polygon points="9.7,2 17.5,18.6 1.8,18.6" fill="#9a9a9a"/><path d="M11.8 7.6 L6.2 12.3 H13.2 L7.8 17" stroke="#f2f23c" stroke-width="1.9" fill="none" stroke-linejoin="miter"/><polygon points="6,15 9.4,17.9 5.8,18.4" fill="#f2f23c"/></g>
<g transform="translate(75.10 443.30)"><polygon points="0,5.3 2,4 9.65,0 17.3,4 19.3,5.3 19.3,8.4 9.65,14.5 0,8.4" fill="#0e0e1e"/><polygon points="2.8,5.5 9.65,2 16.5,5.5 9.65,9" fill="#55557c"/><polygon points="3.9,5.5 9.65,2.6 11.4,3.5 5.6,6.4" fill="#6a6a92"/><polygon points="6.2,5.3 9.65,3.4 13.1,5.3 9.65,7.2" fill="#08081a"/><polygon points="1.3,6.9 9.65,11.2 9.65,12.3 1.3,8.0" fill="#7676a0"/><polygon points="9.65,11.2 18,6.9 18,8.0 9.65,12.3" fill="#3a3a58"/><rect x="7.6" y="9.6" width="1.6" height="1.1" fill="#d0d0ea" opacity="0.85"/></g>
<g transform="translate(75.40 461.80)"><polygon points="9.7,0 19.3,19.7 0,19.7" fill="#8e8e8e"/><polygon points="9.7,2 17.5,18.6 1.8,18.6" fill="#9a9a9a"/><path d="M11.8 7.6 L6.2 12.3 H13.2 L7.8 17" stroke="#f2f23c" stroke-width="1.9" fill="none" stroke-linejoin="miter"/><polygon points="6,15 9.4,17.9 5.8,18.4" fill="#f2f23c"/></g>
<g transform="translate(75.40 482.65)"><polygon points="9.7,0 19.3,19.7 0,19.7" fill="#8e8e8e"/><polygon points="9.7,2 17.5,18.6 1.8,18.6" fill="#9a9a9a"/><path d="M11.8 7.6 L6.2 12.3 H13.2 L7.8 17" stroke="#f2f23c" stroke-width="1.9" fill="none" stroke-linejoin="miter"/><polygon points="6,15 9.4,17.9 5.8,18.4" fill="#f2f23c"/></g>
<g transform="translate(75.40 503.50)"><polygon points="9.7,0 19.3,19.7 0,19.7" fill="#8e8e8e"/><polygon points="9.7,2 17.5,18.6 1.8,18.6" fill="#9a9a9a"/><path d="M11.8 7.6 L6.2 12.3 H13.2 L7.8 17" stroke="#f2f23c" stroke-width="1.9" fill="none" stroke-linejoin="miter"/><polygon points="6,15 9.4,17.9 5.8,18.4" fill="#f2f23c"/></g>

</svg>
</body></html>
